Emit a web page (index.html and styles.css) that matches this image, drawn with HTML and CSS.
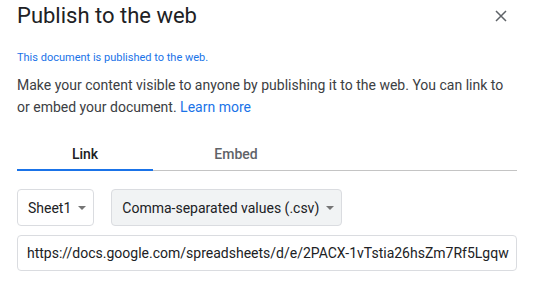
FILE: index.html
```html
<!DOCTYPE html>
<html lang="en">
<head>
    <meta charset="UTF-8">
    <meta name="viewport" content="width=device-width, initial-scale=1.0">
    <title>Publish to the web</title>
    <link rel="stylesheet" href="styles.css">
</head>
<body>
    <div class="dialog">
        <div class="dialog-header">
            <h1>Publish to the web</h1>
            <button class="close" aria-label="Close">
                <svg width="12" height="12" viewBox="0 0 12 12">
                    <path d="M1 1L11 11M11 1L1 11" stroke="#5f6368" stroke-width="1.5" fill="none"/>
                </svg>
            </button>
        </div>

        <p class="status">This document is published to the web.</p>
        <p class="intro">Make your content visible to anyone by publishing it to the web. You can link to or embed your document. <a href="#">Learn more</a></p>

        <div class="tabs">
            <div class="tab active">Link</div>
            <div class="tab">Embed</div>
        </div>

        <div class="options">
            <div class="dropdown">
                <span>Sheet1</span>
                <span class="arrow"></span>
            </div>
            <div class="dropdown format">
                <span>Comma-separated values (.csv)</span>
                <span class="arrow"></span>
            </div>
        </div>

        <div class="url-box">https://docs.google.com/spreadsheets/d/e/2PACX-1vTstia26hsZm7Rf5Lgqw</div>
    </div>
</body>
</html>
```

FILE: styles.css
```css
body {
    font-family: Roboto, Arial, sans-serif;
    margin: 0;
    background-color: #fff;
    color: #3c4043;
}
.dialog {
    width: 500px;
    padding: 0 19px 0 17px;
}
.dialog-header {
    display: flex;
    justify-content: space-between;
    align-items: flex-start;
}
.dialog-header h1 {
    margin: 2px 0 0 0;
    font-size: 22px;
    font-weight: 400;
    line-height: 28px;
    color: #202124;
}
.close {
    border: none;
    background: none;
    padding: 0;
    margin: 10px 10px 0 0;
    width: 12px;
    height: 12px;
    cursor: pointer;
}
.close svg {
    display: block;
}
.status {
    margin: 20px 0 0 0;
    font-size: 11px;
    line-height: 16px;
    color: #1a73e8;
}
.intro {
    margin: 8px 0 0 0;
    font-size: 14px;
    line-height: 22px;
    color: #3c4043;
}
.intro a {
    color: #1a73e8;
    text-decoration: none;
}
.tabs {
    display: flex;
    margin-top: 28px;
    border-bottom: 1px solid #c4c4c4;
}
.tab {
    font-size: 14px;
    font-weight: 500;
    text-align: center;
    padding: 0 0 7px 0;
    color: #5f6368;
}
.tab:first-child {
    width: 136px;
}
.tab:last-child {
    width: 166px;
}
.tab.active {
    color: #202124;
    border-bottom: 2px solid #1a73e8;
    margin-bottom: -1px;
}
.options {
    display: flex;
    gap: 17px;
    margin-top: 18px;
}
.dropdown {
    display: flex;
    align-items: center;
    gap: 7px;
    height: 35px;
    padding: 0 7px 0 10px;
    border: 1px solid #dadce0;
    border-radius: 4px;
    font-size: 14px;
    color: #202124;
}
.dropdown.format {
    background-color: #f1f3f4;
}
.arrow {
    width: 0;
    height: 0;
    border-left: 4px solid transparent;
    border-right: 4px solid transparent;
    border-top: 4px solid #757575;
}
.url-box {
    margin-top: 9px;
    height: 34px;
    line-height: 34px;
    padding: 0 9px;
    border: 1px solid #dadce0;
    border-radius: 4px;
    font-size: 14px;
    color: #202124;
    white-space: nowrap;
    overflow: hidden;
}
```
